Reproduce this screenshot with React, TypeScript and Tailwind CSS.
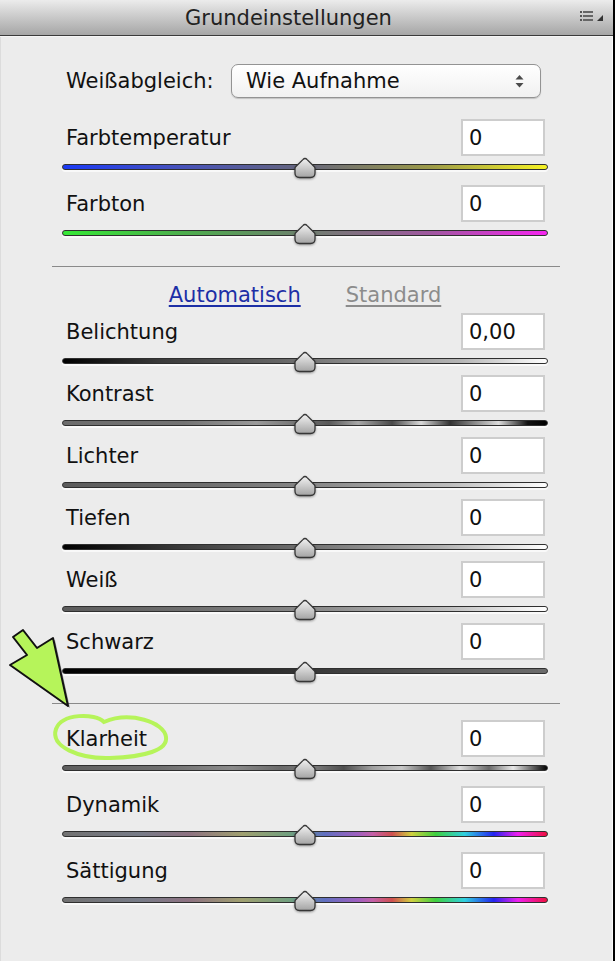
import React from "react";

type Row = { label: string; value: string; track: string };

const topRows: Row[] = [
  {
    label: "Farbtemperatur",
    value: "0",
    track:
      "bg-[linear-gradient(to_right,#1a3af5,#4450c0_22%,#66667c_50%,#9c9a48_76%,#f6f224)]",
  },
  {
    label: "Farbton",
    value: "0",
    track:
      "bg-[linear-gradient(to_right,#36e836,#4cb04c_24%,#6e806e_50%,#a058a0_76%,#f626f0)]",
  },
];

const midRows: Row[] = [
  {
    label: "Belichtung",
    value: "0,00",
    track:
      "bg-[linear-gradient(to_right,#000000,#3a3a3a_20%,#666666_45%,#8a8a8a_60%,#b5b5b5_82%,#ffffff)]",
  },
  {
    label: "Kontrast",
    value: "0",
    track:
      "bg-[linear-gradient(to_right,#6c6c6c,#747474_25%,#9a9a9a_40%,#767676_48%,#5a5a5a_55%,#a8a8a8_61%,#4a4a4a_68%,#d8d8d8_74%,#333333_80%,#8a8a8a_85%,#dddddd_90%,#111111_96%,#000000)]",
  },
  {
    label: "Lichter",
    value: "0",
    track:
      "bg-[linear-gradient(to_right,#5c5c5c,#707070_30%,#8c8c8c_55%,#bdbdbd_80%,#ffffff)]",
  },
  {
    label: "Tiefen",
    value: "0",
    track:
      "bg-[linear-gradient(to_right,#000000,#3c3c3c_25%,#707070_50%,#b0b0b0_78%,#ffffff)]",
  },
  {
    label: "Weiß",
    value: "0",
    track:
      "bg-[linear-gradient(to_right,#5c5c5c,#727272_30%,#8e8e8e_55%,#c0c0c0_80%,#ffffff)]",
  },
  {
    label: "Schwarz",
    value: "0",
    track:
      "bg-[linear-gradient(to_right,#000000,#1e1e1e_30%,#3c3c3c_55%,#5a5a5a_80%,#6c6c6c)]",
  },
];

const lowRows: Row[] = [
  {
    label: "Klarheit",
    value: "0",
    track:
      "bg-[linear-gradient(to_right,#5e5e5e,#6e6e6e_20%,#8a8a8a_35%,#6a6a6a_45%,#7a7a7a_52%,#4e4e4e_58%,#a0a0a0_64%,#c8c8c8_70%,#555555_76%,#dcdcdc_82%,#6a6a6a_88%,#e8e8e8_93%,#000000)]",
  },
  {
    label: "Dynamik",
    value: "0",
    track:
      "bg-[linear-gradient(to_right,#727272,#787c88_16%,#8e7282_26%,#a0a070_37%,#70a080_47%,#6070c0_54%,#a060c0_61%,#c460a8_64%,#d05050_68%,#d0d040_72%,#40d040_77%,#30d0e0_83%,#2424f0_89%,#f020f0_94%,#f01040)]",
  },
  {
    label: "Sättigung",
    value: "0",
    track:
      "bg-[linear-gradient(to_right,#727272,#787c88_16%,#8e7282_26%,#a0a070_37%,#70a080_47%,#6070c0_54%,#a060c0_61%,#c460a8_64%,#d05050_68%,#d0d040_72%,#40d040_77%,#30d0e0_83%,#2424f0_89%,#f020f0_94%,#f01040)]",
  },
];

function Thumb() {
  return (
    <svg
      width="23"
      height="22"
      viewBox="0 0 23 22"
      className="absolute left-1/2 top-[-8px] -translate-x-1/2 drop-shadow-[0_1px_1px_rgba(0,0,0,0.35)]"
    >
      <defs>
        <linearGradient id="thumbGrad" x1="0" y1="0" x2="0" y2="1">
          <stop offset="0" stopColor="#f2f2f2" />
          <stop offset="1" stopColor="#a3a3a3" />
        </linearGradient>
      </defs>
      <path
        d="M11.5 1.5 Q12.6 1.5 13.6 2.6 L20.8 9.8 Q21.5 10.5 21.5 11.6 L21.5 16 Q21.5 20.5 17 20.5 L6 20.5 Q1.5 20.5 1.5 16 L1.5 11.6 Q1.5 10.5 2.2 9.8 L9.4 2.6 Q10.4 1.5 11.5 1.5 Z"
        fill="url(#thumbGrad)"
        stroke="#363636"
        strokeWidth="1.3"
      />
    </svg>
  );
}

function SliderRow({ row }: { row: Row }) {
  return (
    <div className="flex flex-col">
      <div className="flex h-[37px] items-center justify-between">
        <span className="pl-[4px] text-[21px] leading-[24px] text-[#111]">
          {row.label}
        </span>
        <div className="mr-[3px] flex h-[37px] w-[84px] items-center border-2 border-[#cdcdcd] bg-white pl-[6px] text-[21px] leading-[24px] text-[#111]">
          {row.value}
        </div>
      </div>
      <div
        className={`relative mt-[8px] h-[6px] rounded-full border border-[#2f2f2f] shadow-[0_2px_0_0_#f9f9f9] ${row.track}`}
      >
        <Thumb />
      </div>
    </div>
  );
}

export default function App() {
  return (
    <div className="relative h-[961px] w-[615px] overflow-hidden border-r-2 border-black bg-[#ececec] font-['DejaVu_Sans',sans-serif]">
      {/* Header */}
      <div className="flex h-[36px] items-center justify-center border-b border-[#3a3a3a] bg-linear-to-b from-[#ececec] to-[#a6a6a6] pr-[36px]">
        <span className="text-[21px] leading-[24px] text-[#222]">
          Grundeinstellungen
        </span>
        <svg
          width="26"
          height="12"
          viewBox="0 0 26 12"
          className="absolute right-[7px] top-[10px]"
        >
          <rect x="0" y="1" width="2" height="2" fill="#555" />
          <rect x="3" y="1" width="10" height="2" fill="#666" />
          <rect x="0" y="5" width="2" height="2" fill="#555" />
          <rect x="3" y="5" width="10" height="2" fill="#666" />
          <rect x="0" y="9" width="2" height="2" fill="#555" />
          <rect x="3" y="9" width="10" height="2" fill="#666" />
          <polygon points="17,11 23,11 23,5" fill="#333" />
        </svg>
      </div>
      <div className="h-px bg-[#f6f6f6]" />

      {/* Body */}
      <div className="flex h-[924px] flex-col border-l border-r border-l-[#dcdcdc] border-r-[#fafafa]">
        <div className="ml-[61px] flex w-[486px] flex-col">
          {/* White balance */}
          <div className="mt-[27px] flex h-[34px] items-center">
            <span className="w-[169px] shrink-0 pl-[4px] text-[21px] leading-[24px] text-[#111]">
              Weißabgleich:
            </span>
            <div className="relative flex h-[34px] w-[310px] items-center rounded-[7px] border border-[#939393] bg-linear-to-b from-white to-[#f1f1f1] pl-[14px] text-[21px] leading-[24px] text-[#111] shadow-[0_1px_1px_rgba(0,0,0,0.18)]">
              Wie Aufnahme
              <svg
                width="9"
                height="13"
                viewBox="0 0 9 13"
                className="absolute right-[16px] top-[10px]"
              >
                <polygon points="4.5,0 8.5,4.5 0.5,4.5" fill="#4a4a4a" />
                <polygon points="0.5,8 8.5,8 4.5,12.5" fill="#4a4a4a" />
              </svg>
            </div>
          </div>

          {/* Top sliders */}
          <div className="mt-[21px] flex flex-col gap-[15px]">
            {topRows.map((r) => (
              <SliderRow key={r.label} row={r} />
            ))}
          </div>

          <div className="-ml-[10px] mt-[30px] h-px w-[508px] bg-[#8a8a8a]" />

          {/* Auto / Standard */}
          <div className="mt-[16px] flex h-[24px] items-center justify-center gap-[45px] text-[21px] leading-[24px]">
            <span className="text-[#1d2fa6] underline decoration-[1.5px] underline-offset-[3px]">
              Automatisch
            </span>
            <span className="text-[#8c8c8c] underline decoration-[1.5px] underline-offset-[3px]">
              Standard
            </span>
          </div>

          {/* Mid sliders */}
          <div className="mt-[6px] flex flex-col gap-[11px]">
            {midRows.map((r) => (
              <SliderRow key={r.label} row={r} />
            ))}
          </div>

          <div className="-ml-[10px] mt-[29px] h-px w-[508px] bg-[#8a8a8a]" />

          {/* Low sliders */}
          <div className="mt-[16px] flex flex-col gap-[15px]">
            {lowRows.map((r) => (
              <SliderRow key={r.label} row={r} />
            ))}
          </div>
        </div>
      </div>

      {/* Annotation overlay */}
      <svg
        width="615"
        height="961"
        viewBox="0 0 615 961"
        className="pointer-events-none absolute left-0 top-0"
      >
        <polygon
          points="25,632 39,650 55,640 70,708 12,667 29,657 15,639"
          fill="rgba(0,0,0,0.35)"
        />
        <polygon
          points="23,630 37,648 53,638 68,706 10,665 27,655 13,637"
          fill="#b6f45a"
          stroke="#111"
          strokeWidth="2"
          strokeLinejoin="round"
        />
        <path
          d="M104 722 C 95 713, 62 713, 56 729 C 50 747, 80 759, 110 758 C 145 757, 168 750, 166 737 C 164 722, 130 711, 104 722 Z"
          fill="none"
          stroke="#b6f45a"
          strokeWidth="4"
        />
      </svg>
    </div>
  );
}
